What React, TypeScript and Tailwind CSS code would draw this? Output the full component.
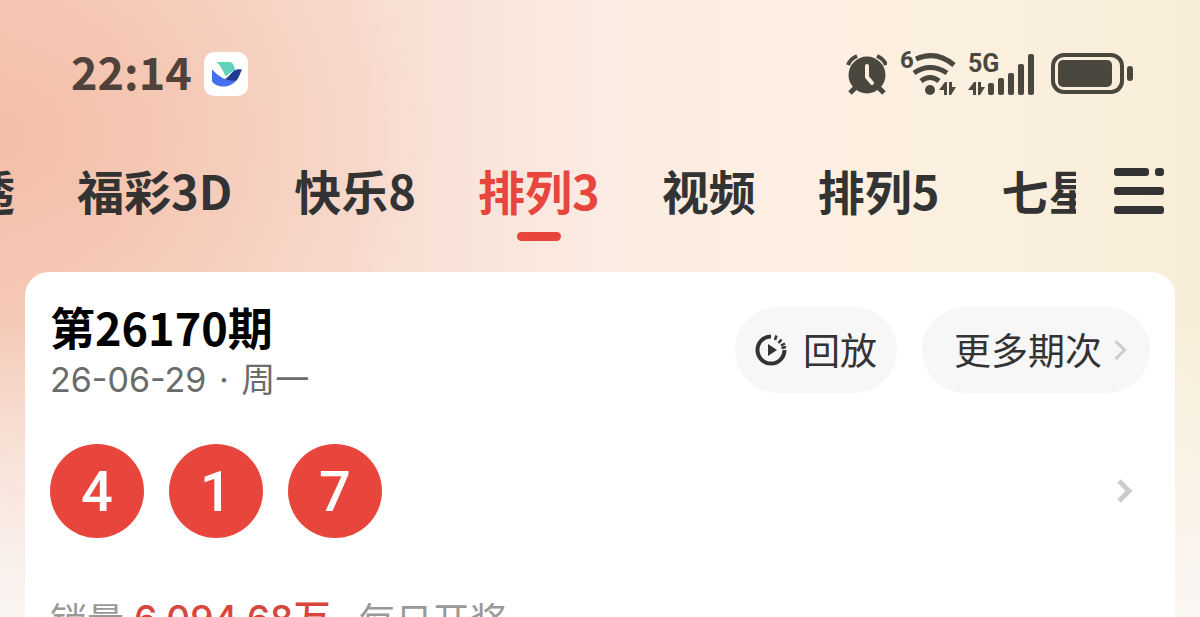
import { clsx } from "clsx";
import { ChevronRight } from "lucide-react";

interface Tab {
  label: string;
  active?: boolean;
}

const TABS: Tab[] = [
  { label: "大乐透" },
  { label: "福彩3D" },
  { label: "快乐8" },
  { label: "排列3", active: true },
  { label: "视频" },
  { label: "排列5" },
  { label: "七星彩" },
];

const BALLS = [4, 1, 7];

function AppBadge() {
  return (
    <svg viewBox="0 0 44 44" className="size-11" aria-hidden="true">
      <rect width="44" height="44" rx="10" fill="#fff" />
      <path d="M12.500 10H25q3.500 0 4.500 3l2 5.500-3.500 1-6.500 5Q18 15 12.500 10Z" fill="#62d2ba" />
      <path d="M8 17.300q6 7 13.500 10l11 1.200Q27 34.500 19.500 34.500 12 34.500 8 29.500Z" fill="#4470ef" />
      <path d="M20.500 27c4-1 6-6 10-8.500q3.500-2 7.500-1c-2 3.500-2.500 7.500-5.500 11q-6 1-12-1.500Z" fill="#203c92" />
    </svg>
  );
}

// up/down data arrows, drawn at the given origin
function DataArrows({ x, y }: { x: number; y: number }) {
  return (
    <g transform={`translate(${x} ${y})`}>
      <path d="M8 0v13H5V8H0L6 0Z" />
      <path d="M10 13V0h3v5h4l-5 8Z" />
    </g>
  );
}

function AlarmIcon() {
  return (
    <svg viewBox="0 0 42 42" className="h-[42px] w-[42px]" aria-hidden="true">
      <g fill="none" stroke="#4a473f" strokeWidth="4">
        <path d="M3 12q2-6 9-9" />
        <path d="M32 3q7 3 9 9" />
        <path d="M11 34l-6 6M33 34l6 6" strokeWidth="5" />
      </g>
      <circle cx="22" cy="22" r="18.500" fill="#4a473f" />
      <path d="M22 13v11l5 6" fill="none" stroke="#fbefdd" strokeWidth="4" strokeLinecap="round" strokeLinejoin="round" />
    </svg>
  );
}

function WifiIcon() {
  return (
    <svg viewBox="0 0 57 44" className="h-11 w-[57px] overflow-visible" fill="#4a473f" aria-hidden="true">
      <text x="1" y="16" fontFamily="Roboto, sans-serif" fontSize="24" fontWeight="700">
        6
      </text>
      <g fill="none" stroke="#4a473f" strokeWidth="5">
        <path d="M17 7q20-9 38 6" />
        <path d="M15 21q16-11 33 0" />
        <path d="M22 29q9-7 18 0" />
      </g>
      <circle cx="31" cy="38" r="5" />
      <DataArrows x={40} y={30} />
    </svg>
  );
}

function SignalIcon() {
  return (
    <svg viewBox="0 0 67 44" className="h-11 w-[67px] overflow-visible" fill="#4a473f" aria-hidden="true">
      <text x="0" y="20" fontFamily="Roboto, sans-serif" fontSize="25" fontWeight="700">
        5G
      </text>
      <DataArrows x={0} y={30} />
      <rect x="20" y="31" width="6" height="12" rx="2" />
      <rect x="30" y="26" width="6" height="17" rx="2" />
      <rect x="40" y="21" width="6" height="22" rx="2" />
      <rect x="50" y="12" width="6" height="31" rx="2" />
      <rect x="60" y="2" width="6" height="41" rx="2" />
    </svg>
  );
}

function BatteryIcon() {
  return (
    <svg viewBox="0 0 82 42" className="h-[42px] w-[82px]" fill="#4a473f" aria-hidden="true">
      <rect x="2" y="2" width="69" height="37" rx="11" fill="none" stroke="#4a473f" strokeWidth="4" />
      <rect x="7" y="7" width="54" height="27" rx="5" />
      <rect x="76" y="13" width="6" height="15" rx="3" />
    </svg>
  );
}

function MenuIcon() {
  return (
    <svg viewBox="0 0 50 46" className="h-[46px] w-[50px]" fill="#333" aria-hidden="true">
      <rect x="0" y="0" width="35" height="8" rx="3" />
      <rect x="41" y="0" width="9" height="8" rx="3" />
      <rect x="0" y="19" width="50" height="8" rx="3" />
      <rect x="0" y="38" width="50" height="8" rx="3" />
    </svg>
  );
}

function ReplayIcon() {
  return (
    <svg viewBox="0 0 32 32" className="size-8" aria-hidden="true">
      <path d="M16 2.500A13.500 13.500 0 1 0 29.500 16" fill="none" stroke="#333" strokeWidth="4" />
      <path
        d="M21.500 1.500l-1.500 4.500M26.500 5.500l-3 3.500M30 9.500l-4 2M31 13l-4.500 1"
        fill="none"
        stroke="#333"
        strokeWidth="2.500"
      />
      <path d="M13 10v12l9-6Z" fill="#333" />
    </svg>
  );
}

function StatusBar() {
  return (
    <header className="flex h-[148px] items-center justify-between pr-[67px] pl-[71px]">
      <div className="flex items-center gap-3">
        <time className="pb-2 text-[45px] leading-none font-bold text-[#50423b]">22:14</time>
        <AppBadge />
      </div>
      <div className="flex items-center gap-3">
        <AlarmIcon />
        <WifiIcon />
        <SignalIcon />
        <div className="ml-1">
          <BatteryIcon />
        </div>
      </div>
    </header>
  );
}

function TabBar() {
  return (
    <div className="flex h-[124px] items-start">
      <nav className="flex flex-1 gap-[62px] overflow-hidden" aria-label="彩种">
        {TABS.map((tab, i) => (
          <button
            key={tab.label}
            type="button"
            aria-current={tab.active ? "page" : undefined}
            className={clsx(
              "flex shrink-0 flex-col items-center text-[47px] leading-[84px] font-bold whitespace-nowrap",
              tab.active ? "text-[#e8453c]" : "text-[#333]",
              // the strip is scrolled, only the tail of the first tab shows
              i === 0 && "-ml-[126px]",
            )}
          >
            {tab.label}
            {tab.active && <span className="h-[9px] w-11 rounded-full bg-[#e8453c]" />}
          </button>
        ))}
      </nav>
      <button type="button" aria-label="全部彩种" className="mt-5 mr-9 ml-[38px] shrink-0">
        <MenuIcon />
      </button>
    </div>
  );
}

function DrawCard() {
  return (
    <main className="mx-[25px] rounded-t-3xl bg-white px-[25px] pt-[35px]">
      <div className="flex items-start justify-between">
        <div>
          <h1 className="text-[45px] leading-[40px] font-bold text-black">第26170期</h1>
          <p className="mt-[11px] font-[Inter,'Noto_Sans_CJK_SC',sans-serif] text-[34px] leading-[44px] text-[#6b6b6b]">
            26-06-29 <span className="mx-[3px]">·</span> 周一
          </p>
        </div>
        <div className="flex gap-[25px] text-[37px] text-[#333]">
          <button type="button" className="flex h-[86px] items-center gap-4 rounded-full bg-[#f7f7f7] px-5">
            <ReplayIcon />
            回放
          </button>
          <button type="button" className="flex h-[86px] items-center rounded-full bg-[#f7f7f7] pr-3 pl-8">
            更多期次
            <ChevronRight
              className="size-9 text-[#ccc]"
              strokeWidth={2}
              strokeLinecap="butt"
              strokeLinejoin="miter"
            />
          </button>
        </div>
      </div>

      <div className="mt-[42px] flex items-center justify-between pr-1.5">
        <ul className="flex gap-[25px]">
          {BALLS.map((n) => (
            <li
              key={n}
              className="flex size-[94px] items-center justify-center rounded-full bg-[#e8453c] pt-0.5 font-[Roboto,sans-serif] text-[56px] leading-none font-medium text-white"
            >
              {n}
            </li>
          ))}
        </ul>
        <ChevronRight
          className="size-10 text-[#ccc]"
          strokeWidth={3}
          strokeLinecap="butt"
          strokeLinejoin="miter"
        />
      </div>

      <p className="mt-[56px] flex text-[37px] leading-[50px] text-[#999]">
        <span>销量</span>
        <span className="ml-2.5 font-[Inter,'Noto_Sans_CJK_SC',sans-serif] font-medium text-[#d8453c]">
          6,094.68万
        </span>
        <span className="ml-7">每日开奖</span>
      </p>
    </main>
  );
}

export default function App() {
  return (
    <div className="h-screen overflow-hidden bg-[linear-gradient(to_bottom,transparent_52%,#faf6f3_100%),radial-gradient(ellipse_36%_55%_at_0%_22%,#f3b9a0cc,transparent),linear-gradient(to_right,#f6d2c3_0%,#f8ddd1_30%,#fbebe2_50%,#fdf0e2_70%,#f8eed8_100%)] font-['Noto_Sans_CJK_SC',sans-serif]">
      <StatusBar />
      <TabBar />
      <DrawCard />
    </div>
  );
}
